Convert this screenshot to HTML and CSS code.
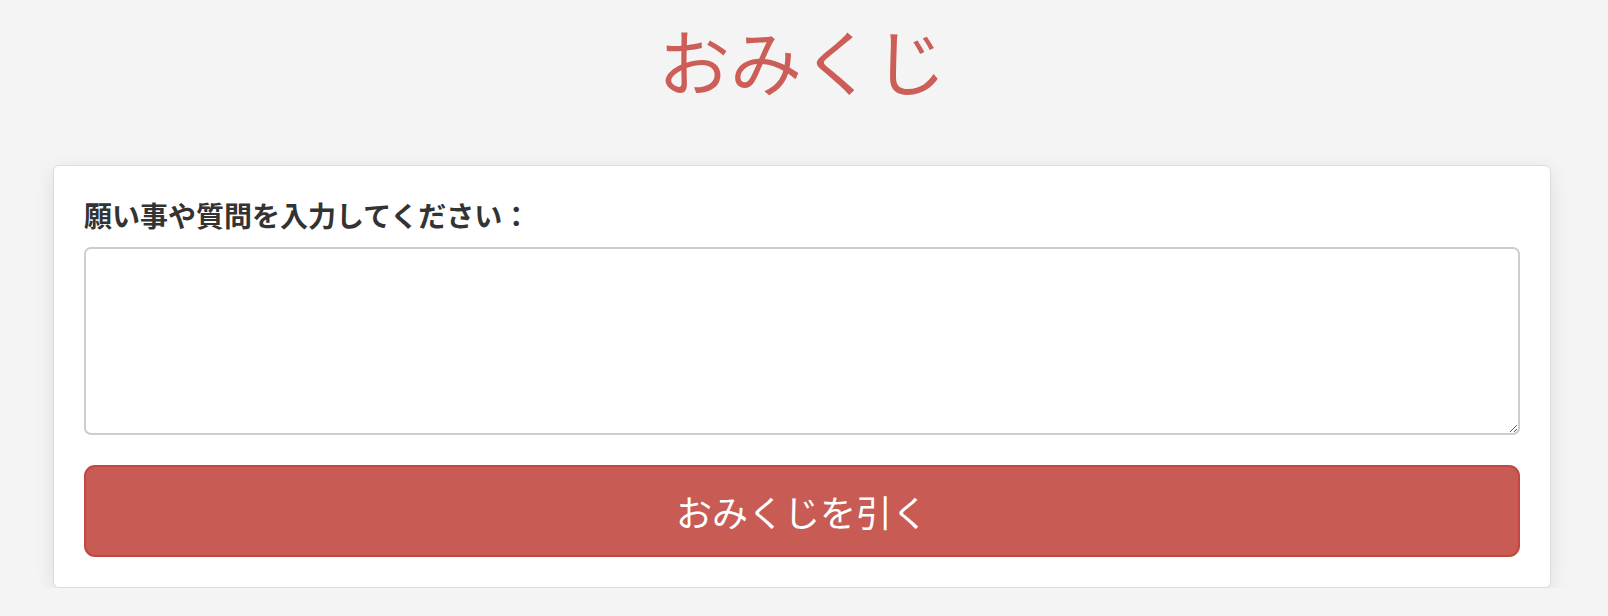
FILE: index.html
```html
<!DOCTYPE html>
<html lang="ja">
<head>
<meta charset="utf-8">
<title>おみくじ</title>
<link rel="stylesheet" href="styles.css">
</head>
<body>
<main class="page">
  <h1 class="title">おみくじ</h1>
  <section class="card">
    <label class="label" for="wish">願い事や質問を入力してください：</label>
    <textarea id="wish" class="input"></textarea>
    <button class="draw" type="button">おみくじを引く</button>
  </section>
</main>
</body>
</html>
```

FILE: styles.css
```css
* { box-sizing: border-box; }

body {
  margin: 0;
  padding-left: 53px;
  background: #f4f4f4;
  font-family: "Noto Sans CJK JP", "Noto Sans", sans-serif;
  color: #333;
}

.page {
  width: 1498px;
  padding-top: 16px;
}

.title {
  margin: 0 0 63px;
  text-align: center;
  font-size: 72px;
  font-weight: 400;
  line-height: 86px;
  color: #cd5e57;
}

.card {
  display: flex;
  flex-direction: column;
  background: #fff;
  border: 1px solid #dcdcdc;
  border-radius: 6px;
  padding: 30px;
  box-shadow: 0 5px 20px rgba(0, 0, 0, 0.09);
}

.label {
  font-size: 28px;
  font-weight: 700;
  line-height: 39px;
  color: #333;
  margin-bottom: 12px;
}

.input {
  width: 100%;
  height: 188px;
  border: 2px solid #cdcdcd;
  border-radius: 7px;
  padding: 10px;
  font-family: inherit;
  font-size: 20px;
  background: #fff;
  resize: vertical;
}

.draw {
  margin-top: 30px;
  width: 100%;
  height: 92px;
  border: 2px solid #c2473f;
  border-radius: 11px;
  background: #c85c55;
  color: #fff;
  font-family: inherit;
  font-size: 36px;
  font-weight: 400;
}
```
